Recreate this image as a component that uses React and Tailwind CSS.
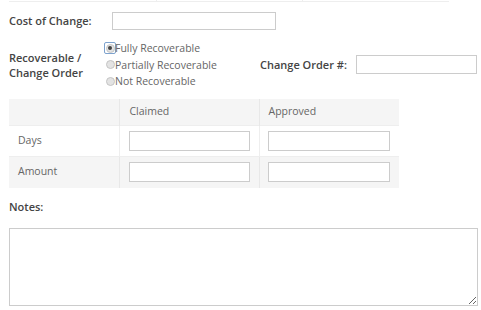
function Radio({ checked, label }) {
  return (
    <label className="flex items-center whitespace-nowrap">
      <span
        className={
          checked
            ? "w-[10px] h-[10px] flex items-center justify-center outline outline-1 outline-[#7da2ce] rounded-[1px]"
            : "w-[10px] h-[10px] flex items-center justify-center"
        }
      >
        <span className="w-[9px] h-[9px] rounded-full bg-[#e3e3e3] border border-[#c4c4c4] flex items-center justify-center">
          {checked && <span className="w-[4px] h-[4px] rounded-full bg-[#444]" />}
        </span>
      </span>
      <span>{label}</span>
    </label>
  );
}

function Field({ w, h = 20 }) {
  return (
    <input
      className="block border border-[#ccc] bg-white outline-none"
      style={{ width: w, height: h }}
    />
  );
}

export default function App() {
  const font = { fontFamily: '"Open Sans", sans-serif' };

  return (
    <div className="w-[481px] h-[310px] bg-white overflow-hidden text-[10.5px] text-[#555]" style={font}>
      {/* remnant of the table above */}
      <div className="ml-[9px] w-[440px] h-[2px] flex border-b border-[#eee]">
        <div className="w-[148px] border-r border-[#eee]" />
        <div className="w-[146px] border-r border-[#eee]" />
        <div className="flex-1" />
      </div>

      <div className="pl-[9px] pt-[10px] flex items-center">
        <div className="w-[103px] text-[11px] font-semibold text-[#444]">Cost of Change:</div>
        <Field w={164} h={18} />
      </div>

      <div className="pl-[9px] pt-[10px] flex items-center">
        <div className="w-[96px] text-[11px] font-semibold text-[#444] leading-[15px]">
          Recoverable /<br />Change Order
        </div>
        <div className="w-[155px] flex flex-col leading-[16.5px] text-[#666]">
          <Radio checked label="Fully Recoverable" />
          <Radio label="Partially Recoverable" />
          <Radio label="Not Recoverable" />
        </div>
        <div className="w-[96px] text-[11px] font-semibold text-[#444] whitespace-nowrap">Change Order #:</div>
        <Field w={121} h={19} />
      </div>

      <table className="ml-[9px] mt-[9px] w-[390px] border-collapse text-[#666]">
        <thead>
          <tr className="bg-[#f5f5f5] h-[27px]">
            <th className="w-[110px] border-r border-[#e8e8e8]" />
            <th className="w-[140px] text-left font-normal pl-[10px] border-r border-[#e8e8e8]">Claimed</th>
            <th className="text-left font-normal pl-[9px]">Approved</th>
          </tr>
        </thead>
        <tbody>
          <tr className="h-[31px] border-t border-[#eee]">
            <td className="pl-[9px] border-r border-[#eee]">Days</td>
            <td className="pl-[9px] border-r border-[#eee]">
              <Field w={121} />
            </td>
            <td className="pl-[8px]">
              <Field w={122} />
            </td>
          </tr>
          <tr className="h-[31px] bg-[#f5f5f5] border-t border-[#eee]">
            <td className="pl-[9px] border-r border-[#e8e8e8]">Amount</td>
            <td className="pl-[9px] border-r border-[#e8e8e8]">
              <Field w={121} />
            </td>
            <td className="pl-[8px]">
              <Field w={122} />
            </td>
          </tr>
        </tbody>
      </table>

      <div className="pl-[9px] pt-[11px] text-[11px] font-semibold text-[#444]">Notes:</div>

      <textarea className="block ml-[9px] mt-[13px] w-[469px] h-[78px] border border-[#ccc] bg-white outline-none resize-y" />
    </div>
  );
}
